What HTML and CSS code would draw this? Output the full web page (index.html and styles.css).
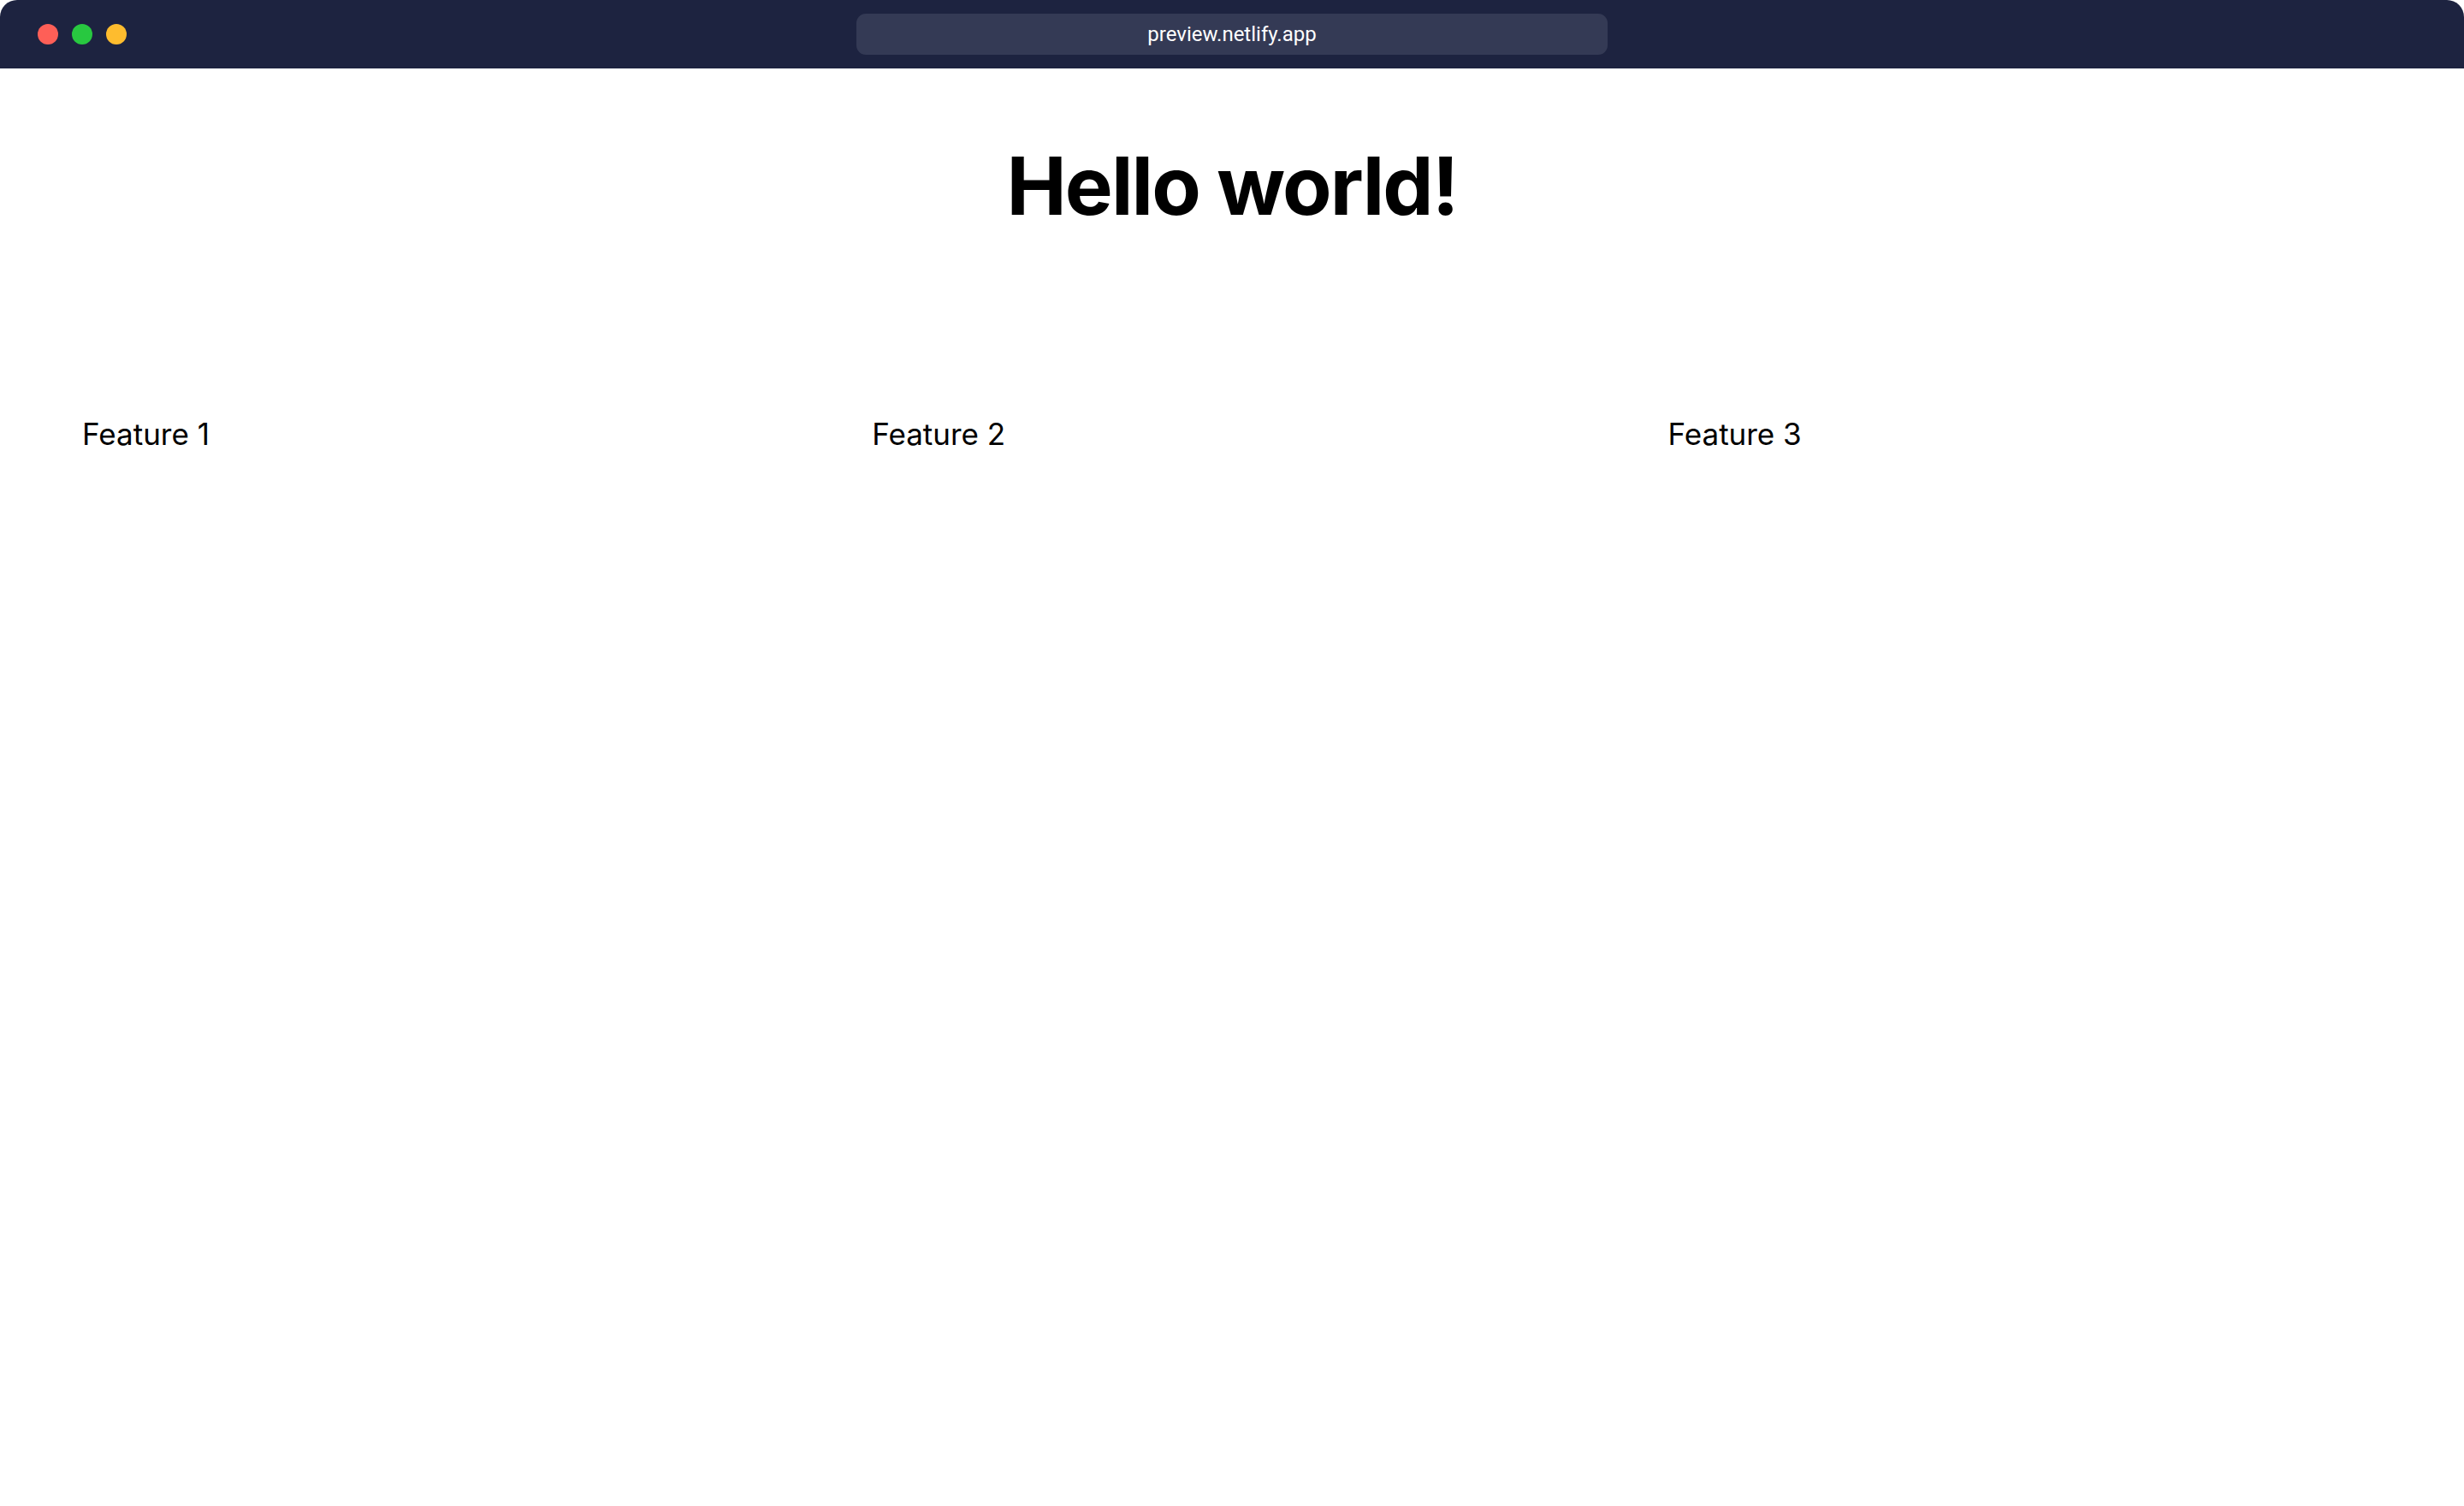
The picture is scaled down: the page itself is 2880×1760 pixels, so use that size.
FILE: index.html
```html
<!DOCTYPE html>
<html lang="en">
<head>
<meta charset="utf-8">
<title>preview.netlify.app</title>
<link rel="stylesheet" href="styles.css">
</head>
<body>
<div class="window">
  <header class="titlebar">
    <div class="lights">
      <span class="light red"></span>
      <span class="light green"></span>
      <span class="light yellow"></span>
    </div>
    <div class="address">preview.netlify.app</div>
  </header>
  <main class="page">
    <h1 class="title">Hello world!</h1>
    <section class="features">
      <div class="feature">Feature 1</div>
      <div class="feature">Feature 2</div>
      <div class="feature">Feature 3</div>
    </section>
  </main>
</div>
</body>
</html>
```

FILE: styles.css
```css
* { box-sizing: border-box; }
html, body {
  margin: 0;
  padding: 0;
  background: #ffffff;
  font-family: Inter, "Noto Sans", sans-serif;
}
.window {
  width: 2880px;
  height: 1760px;
  display: flex;
  flex-direction: column;
  background: #ffffff;
}
.titlebar {
  height: 80px;
  background: #1d2340;
  border-top-left-radius: 20px;
  border-top-right-radius: 20px;
  display: grid;
  grid-template-columns: 1fr 878px 1fr;
  align-items: center;
}
.lights {
  display: flex;
  gap: 16px;
  padding-left: 44px;
}
.light {
  width: 24px;
  height: 24px;
  border-radius: 50%;
}
.red { background: #fe5f57; }
.green { background: #28c840; }
.yellow { background: #febc2e; }
.address {
  height: 48px;
  background: #343a55;
  border-radius: 11px;
  color: #ffffff;
  font-family: Roboto, Inter, sans-serif;
  font-size: 24px;
  display: flex;
  align-items: center;
  justify-content: center;
}
.page {
  flex: 1;
}
.title {
  margin: 0;
  padding-top: 81px;
  text-align: center;
  font-size: 94px;
  font-weight: 700;
  letter-spacing: -0.02em;
  line-height: 1.2;
  color: #000000;
}
.features {
  display: flex;
  padding-left: 96px;
  margin-top: 207px;
}
.feature {
  flex: 1 1 auto;
  font-size: 35px;
  color: #000000;
  line-height: 1.5;
}
```
